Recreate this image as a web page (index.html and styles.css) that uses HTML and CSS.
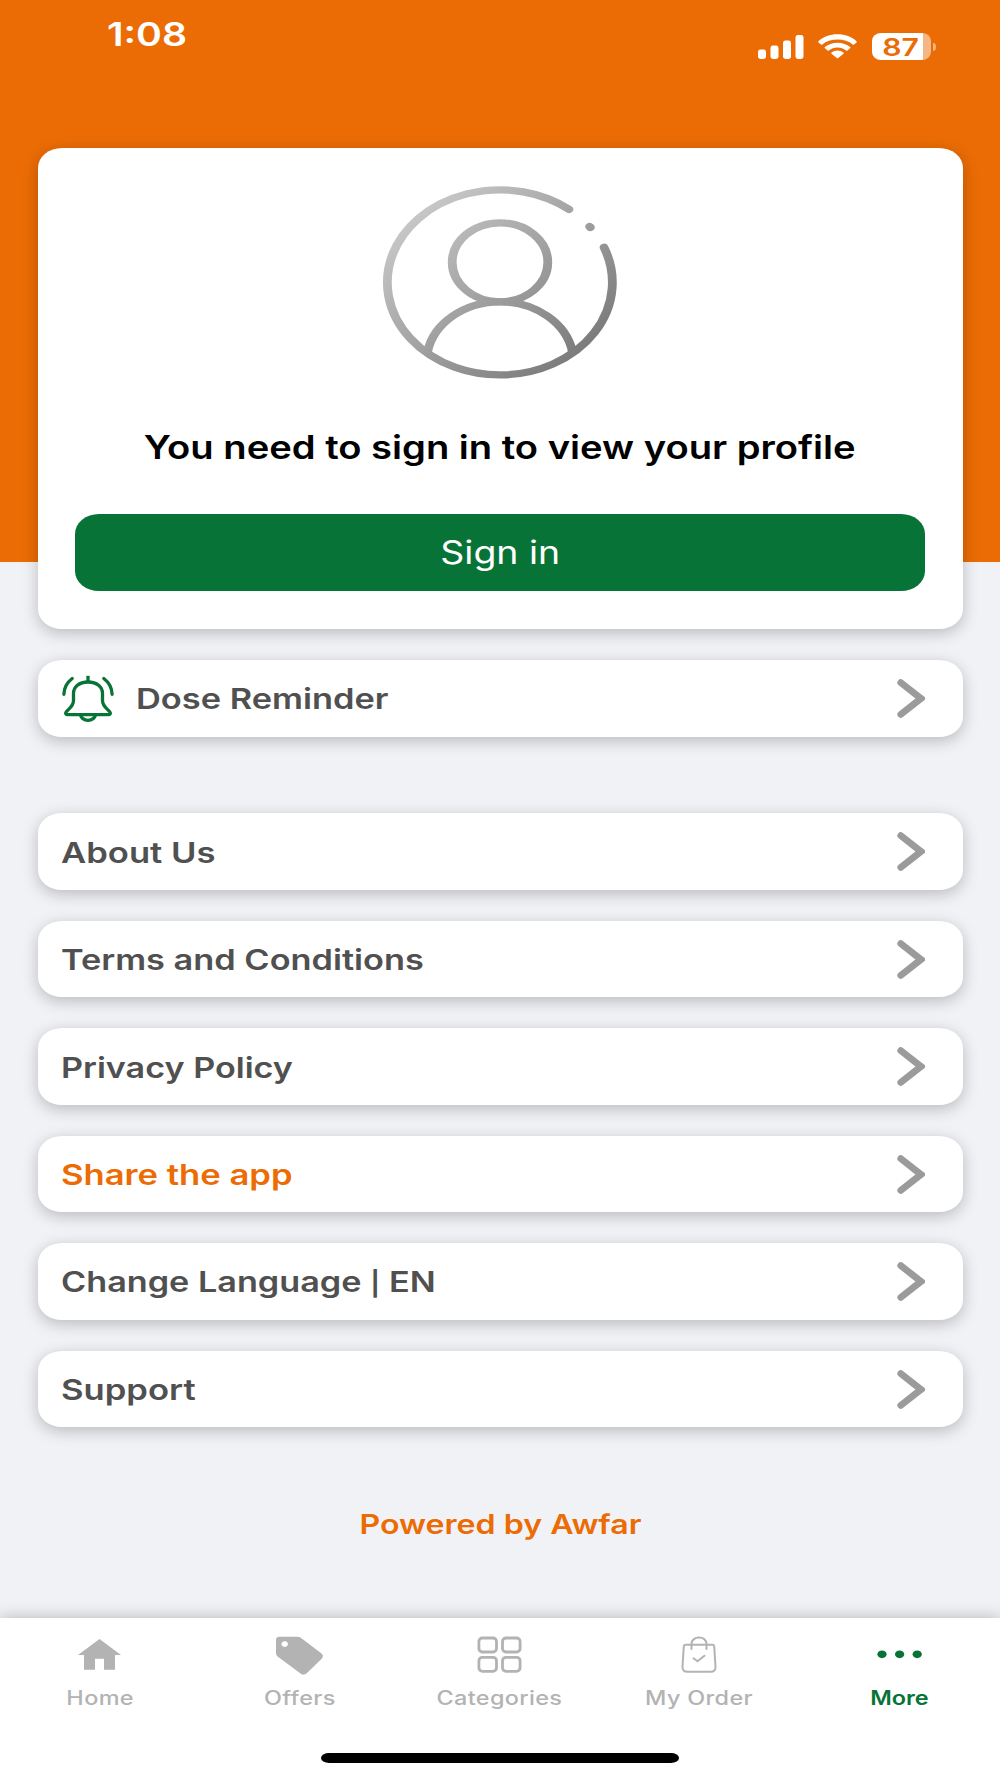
FILE: index.html
```html
<!DOCTYPE html>
<html lang="en">
<head>
<meta charset="utf-8">
<title>More</title>
<link rel="stylesheet" href="styles.css">
</head>
<body>
<svg width="0" height="0" class="defs" aria-hidden="true">
  <symbol id="chevron" viewBox="0 0 28 39" preserveAspectRatio="none">
    <path d="M3.8 3.6 24 19.5 3.8 35.4" fill="none" stroke="#9b9b9b" stroke-width="6.8" stroke-linecap="round" stroke-linejoin="miter"/>
  </symbol>
</svg>
<div class="screen">
  <header class="status">
    <span class="text time">1:08</span>
    <div class="indicators">
      <svg width="46" height="25" viewBox="0 0 46 25" fill="#fff">
        <rect x="0" y="15.5" width="8" height="9.5" rx="2.4"/>
        <rect x="12.5" y="11.5" width="8" height="13.5" rx="2.4"/>
        <rect x="25" y="6.5" width="8" height="18.5" rx="2.4"/>
        <rect x="37.5" y="1" width="8" height="24" rx="2.4"/>
      </svg>
      <svg width="39" height="25" viewBox="0 0 39 25" fill="#fff">
        <path d="M19.5 0.3C27 0.3 33.7 2.9 38.5 7.2q.6.6 0 1.2L36 10.5q-.6.5-1.3 0C31 7.3 25.5 5.5 19.5 5.5S8 7.3 4.3 10.5q-.7.5-1.3 0L.5 8.4q-.6-.6 0-1.2C5.3 2.9 12 .3 19.5 .3z"/>
        <path d="M19.5 8.7c5 0 9.3 1.6 12.6 4.4q.6.6 0 1.2l-2.7 2.2q-.6.5-1.3 0c-2.4-1.9-5.3-2.9-8.6-2.9s-6.2 1-8.6 2.9q-.7.5-1.3 0l-2.7-2.2q-.6-.6 0-1.2c3.3-2.8 7.6-4.4 12.6-4.4z"/>
        <path d="M19.5 16.5c2.3 0 4.4.8 6 2.1q.6.6 0 1.1l-5.3 4.3q-.7.6-1.4 0l-5.3-4.3q-.6-.5 0-1.1c1.6-1.3 3.7-2.1 6-2.1z"/>
      </svg>
      <div class="battery">
        <div class="battery-body"><span class="text level">87</span></div>
        <div class="battery-cap"></div>
      </div>
    </div>
  </header>

  <main>
    <section class="card profile">
      <svg class="avatar" viewBox="0 0 234 234" preserveAspectRatio="none" fill="none" stroke="url(#metal)" stroke-width="8.8" stroke-linecap="round">
        <defs>
          <linearGradient id="metal" gradientUnits="userSpaceOnUse" x1="35" y1="35" x2="199" y2="199">
            <stop offset="0" stop-color="#c6c6c6"/>
            <stop offset="1" stop-color="#7c7c7c"/>
          </linearGradient>
        </defs>
        <path d="M186 28.4A112.5 112.5 0 1 0 221 74.6"/>
        <ellipse cx="117" cy="92.7" rx="47.8" ry="48"/>
        <path d="M44.5 201.8A73.6 73.6 0 0 1 189.5 201.8"/>
        <path d="M206.6 49.3 207.4 50.3"/>
      </svg>
      <h1 class="text">You need to sign in to view your profile</h1>
      <button class="signin"><span class="text">Sign in</span></button>
    </section>

    <a class="card row reminder">
      <svg width="52" height="47" viewBox="0 0 52 47" fill="none" stroke="#077336" stroke-width="3.3" stroke-linecap="round" stroke-linejoin="round">
        <path d="M26 7V.8" stroke-linecap="butt"/>
        <path d="M26 7C17 7 11.5 12 11.5 18.5v7C11.5 31.5 6.5 34 4.300 36.700c-1.400 1.900-.4 3 1.500 3h40.400c1.900 0 2.900-1.100 1.500-3C45.500 34 40.500 31.500 40.500 25.500v-7C40.500 12 35 7 26 7z"/>
        <path d="M18.500 40c1 3.500 4 5.300 7.500 5.300s6.500-1.800 7.500-5.300"/>
        <path d="M10.200 3.500C5 7.500 2 13.500 1.900 19.300M41.800 3.500C47 7.500 50 13.500 50.100 19.300"/>
      </svg>
      <span class="text label-dose">Dose Reminder</span>
      <svg class="chevron"><use href="#chevron"/></svg>
    </a>

    <nav class="menu">
      <a class="card row"><span class="text label-about">About Us</span><svg class="chevron"><use href="#chevron"/></svg></a>
      <a class="card row"><span class="text">Terms and Conditions</span><svg class="chevron"><use href="#chevron"/></svg></a>
      <a class="card row"><span class="text label-privacy">Privacy Policy</span><svg class="chevron"><use href="#chevron"/></svg></a>
      <a class="card row share"><span class="text label-share">Share the app</span><svg class="chevron"><use href="#chevron"/></svg></a>
      <a class="card row"><span class="text label-language">Change Language <span class="bar">|</span> EN</span><svg class="chevron"><use href="#chevron"/></svg></a>
      <a class="card row"><span class="text label-support">Support</span><svg class="chevron"><use href="#chevron"/></svg></a>
    </nav>

    <p class="powered"><span class="text">Powered by Awfar</span></p>
  </main>

  <footer class="tabbar">
    <nav class="tabs">
      <a class="tab">
        <svg width="50" height="40" viewBox="0 0 50 40" fill="#b3b3b3"><path d="M24.500 3 46 19H40V33.700H29V22.700H20V33.700H9V19H3z"/></svg>
        <span class="text">Home</span>
      </a>
      <a class="tab">
        <svg width="50" height="40" viewBox="0 0 50 40" fill="#b3b3b3"><path fill-rule="evenodd" d="M4.500.8H22.500q2 0 3.600 1.200L46.200 17.300q3 2.500.7 5.200L32 37q-3.100 3-6.500.4L2.300 20.200Q1 19 1 17V4Q1 .8 4.500.8zM9.700 5.200a3.300 2.900 0 1 0 .01 0z"/></svg>
        <span class="text">Offers</span>
      </a>
      <a class="tab">
        <svg width="50" height="40" viewBox="0 0 50 40" fill="none" stroke="#b3b3b3" stroke-width="2.800"><rect x="4.900" y="2" width="17.600" height="14" rx="3.500"/><rect x="28.500" y="2" width="17.600" height="14" rx="3.500"/><rect x="4.900" y="21.300" width="17.600" height="14" rx="3.500"/><rect x="28.500" y="21.300" width="17.600" height="14" rx="3.500"/></svg>
        <span class="text">Categories</span>
      </a>
      <a class="tab">
        <svg width="50" height="40" viewBox="0 0 50 40" fill="none" stroke="#b3b3b3" stroke-width="2" stroke-linecap="round" stroke-linejoin="round"><path d="M11.500 8.700h27q1.500 0 1.700 1.600L41.500 30.500q.3 5.300-5 5.300H13.500q-5.300 0-5-5.300L9.800 10.300q.2-1.600 1.700-1.600z"/><path d="M17.500 13V8C17.500-.7 32.500-.7 32.500 8v5M19.500 22.300l4 3 7-5.600"/></svg>
        <span class="text">My Order</span>
      </a>
      <a class="tab active">
        <svg width="50" height="40" viewBox="0 0 50 40" fill="#077336"><ellipse cx="8" cy="18.300" rx="4.600" ry="3.900"/><ellipse cx="25.600" cy="18.300" rx="4.600" ry="3.900"/><ellipse cx="43.200" cy="18.300" rx="4.600" ry="3.900"/></svg>
        <span class="text">More</span>
      </a>
    </nav>
    <div class="home-indicator"></div>
  </footer>
</div>
</body>
</html>
```
FILE: styles.css
```css
* { box-sizing: border-box; }

body {
  margin: 0;
  font-family: Inter, "Liberation Sans", sans-serif;
  font-weight: 600;
  color: #505050;
}

.defs { display: block; }

.screen {
  display: flex;
  flex-direction: column;
  width: 1000px;
  height: 1778px;
  overflow: hidden;
  background: linear-gradient(#eb6c05 561.7px, #f1f2f6 561.7px);
}

/* Extended letterforms: every label is widened horizontally. */
.text {
  display: inline-block;
  white-space: nowrap;
  transform: translateY(1px) scaleX(var(--stretch, 1.204));
}

.status {
  display: flex;
  justify-content: space-between;
  align-items: flex-start;
  height: 148px;
  padding: 14px 64.5px 0 107px;
  color: #fff;
}

.time {
  --stretch: 1.225;
  font-size: 32px;
  line-height: 40px;
  transform-origin: left;
}

.indicators {
  display: flex;
  align-items: center;
  gap: 14.5px;
  padding-top: 19px;
}

.battery { display: flex; align-items: center; gap: 2px; }

.battery-body {
  display: grid;
  place-items: center;
  width: 59px;
  height: 27px;
  border-radius: 9px / 8px;
  background: linear-gradient(90deg, #fff 51px, #f5b682 51px);
  color: #eb6c05;
}

.level { --stretch: 1.26; font-size: 24px; line-height: 26px; }

.battery-cap {
  width: 3px;
  height: 8px;
  border-radius: 0 3px 3px 0 / 0 4px 4px 0;
  background: #f5b682;
}

main {
  flex: 1;
  padding: 0 37.5px;
}

.card {
  background: #fff;
  border-radius: 24px / 20px;
  box-shadow: 0 4px 16px rgba(0, 0, 0, .23);
}

.profile {
  display: flex;
  flex-direction: column;
  align-items: center;
  height: 481px;
  padding: 38px 37.5px;
}

.avatar { width: 234px; height: 192.5px; overflow: visible; }

h1 {
  --stretch: 1.192;
  margin: 48px 0 0;
  font-size: 32px;
  line-height: 40px;
  font-weight: 600;
  color: #000;
}

.signin {
  width: 850px;
  height: 76.5px;
  margin-top: 47.5px;
  padding: 0;
  border: 0;
  border-radius: 24px / 20px;
  background: #077336;
  color: #fff;
  font: 400 32px/40px Inter, "Liberation Sans", sans-serif;
}

.signin .text { --stretch: 1.17; }

.row {
  display: flex;
  align-items: center;
  height: 76.6px;
  padding: 0 38px 0 23.5px;
  font-size: 28.5px;
  line-height: 40px;
}

.row .text { transform-origin: left; }

.reminder {
  gap: 21.5px;
  margin: 31px 0 76.8px;
  padding-left: 24.8px;
}

.chevron { width: 28px; height: 39px; margin-left: auto; }

.menu { display: grid; gap: 30.9px; }

.share { color: #eb6c05; }

.label-dose { --stretch: 1.207; }
.label-about { --stretch: 1.215; }
.label-privacy { --stretch: 1.198; }
.label-share { --stretch: 1.215; }
.label-language { --stretch: 1.200; }
.label-support { --stretch: 1.215; }

.bar { font-size: 24px; }

.powered {
  margin: 77px 0 0;
  text-align: center;
  font-size: 27px;
  line-height: 40px;
  color: #eb6c05;
}

.powered .text { --stretch: 1.190; }

.tabbar {
  display: flex;
  flex-direction: column;
  align-items: center;
  justify-content: space-between;
  height: 160px;
  padding: 18px 0 15px;
  background: #fff;
  box-shadow: 0 0 16px rgba(0, 0, 0, .26);
}

.tabs {
  display: grid;
  grid-template-columns: repeat(5, 1fr);
  width: 999px;
  margin-right: 1px;
}

.tab {
  display: flex;
  flex-direction: column;
  align-items: center;
  gap: 10px;
  font-size: 19.5px;
  line-height: 23px;
  font-weight: 500;
  letter-spacing: .3px;
  color: #b3b3b3;
}

.tab .text { --stretch: 1.20; }

.active { color: #077336; font-weight: 600; letter-spacing: 0; }

.home-indicator {
  width: 358px;
  height: 10px;
  border-radius: 8px / 5px;
  background: #000;
}
```
